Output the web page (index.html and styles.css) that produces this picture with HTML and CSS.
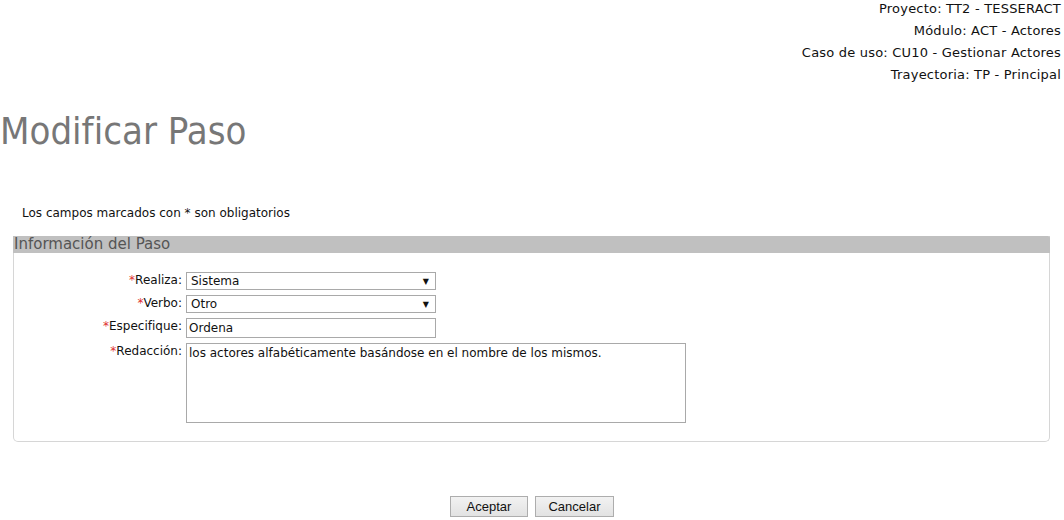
FILE: index.html
```html
<!DOCTYPE html>
<html lang="es">
<head>
<meta charset="utf-8">
<title>Modificar Paso</title>
<link rel="stylesheet" href="styles.css">
</head>
<body>
<div class="context">
  <div class="ctx-line">Proyecto: TT2 - TESSERACT</div>
  <div class="ctx-line">Módulo: ACT - Actores</div>
  <div class="ctx-line">Caso de uso: CU10 - Gestionar Actores</div>
  <div class="ctx-line">Trayectoria: TP - Principal</div>
</div>
<h1 class="title">Modificar Paso</h1>
<p class="notice">Los campos marcados con <span class="req-plain">*</span> son obligatorios</p>
<div class="panel">
  <div class="panel-head">Información del Paso</div>
  <div class="form">
    <label class="lbl"><span class="req">*</span>Realiza:</label>
    <div class="select"><span class="select-val">Sistema</span><span class="arrow">▼</span></div>
    <label class="lbl"><span class="req">*</span>Verbo:</label>
    <div class="select"><span class="select-val">Otro</span><span class="arrow">▼</span></div>
    <label class="lbl"><span class="req">*</span>Especifique:</label>
    <div class="text">Ordena</div>
    <label class="lbl"><span class="req">*</span>Redacción:</label>
    <div class="area">los actores alfabéticamente basándose en el nombre de los mismos.</div>
  </div>
</div>
<div class="buttons">
  <button class="btn btn-ok">Aceptar</button>
  <button class="btn btn-cancel">Cancelar</button>
</div>
</body>
</html>
```
FILE: styles.css
```css
html, body {
  margin: 0;
  padding: 0;
  background: #ffffff;
}
body {
  font-family: "DejaVu Sans", sans-serif;
  color: #111111;
  width: 1064px;
  height: 520px;
  overflow: hidden;
}
.context {
  text-align: right;
  padding: 1px 3px 0 0;
  font-size: 13px;
  letter-spacing: 0.2px;
}
.ctx-line {
  line-height: 16px;
  margin-bottom: 6px;
}
.title {
  margin: 27px 0 0 0;
  font-family: "DejaVu Sans Condensed", "DejaVu Sans", sans-serif;
  font-weight: normal;
  font-size: 38px;
  line-height: 42px;
  color: #777777;
}
.notice {
  margin: 53px 0 0 22px;
  font-size: 12px;
  line-height: 16px;
}
.req-plain { color: #111111; }
.panel {
  margin: 15px 14px 0 13px;
  border: 1px solid #d6d6d6;
  border-top: none;
  border-radius: 0 0 5px 5px;
}
.panel-head {
  background: #c0c0c0;
  color: #555555;
  font-size: 15px;
  line-height: 17px;
  height: 17px;
  padding-left: 1px;
  margin-left: -1px;
  margin-right: -1px;
  border-top-right-radius: 2px;
}
.form {
  display: grid;
  grid-template-columns: 168px auto;
  column-gap: 4px;
  row-gap: 5px;
  padding: 19px 0 18px 0;
  justify-content: start;
  align-items: start;
}
.lbl {
  text-align: right;
  font-size: 12px;
  line-height: 15px;
  padding-top: 1px;
}
.req {
  color: #e03030;
}
.select, .text, .area {
  border: 1px solid #a9a9a9;
  box-sizing: border-box;
  font-size: 12px;
  background: #ffffff;
}
.select {
  width: 250px;
  height: 18px;
  display: flex;
  justify-content: space-between;
  align-items: center;
  padding: 0 6px 0 4px;
}
.arrow {
  font-size: 8px;
  color: #111111;
}
.text {
  width: 250px;
  height: 20px;
  line-height: 18px;
  padding-left: 2px;
}
.area {
  width: 500px;
  height: 80px;
  padding: 1px 2px;
  line-height: 16px;
}
.buttons {
  display: flex;
  justify-content: center;
  gap: 7px;
  margin-top: 54px;
}
.btn {
  font-family: "Liberation Sans", Arial, sans-serif;
  font-size: 13px;
  height: 21px;
  padding: 0;
  border: 1px solid #adadad;
  background: linear-gradient(#f2f2f2, #e2e2e2);
  color: #111111;
}
.btn-ok { width: 78px; }
.btn-cancel { width: 79px; }
```
